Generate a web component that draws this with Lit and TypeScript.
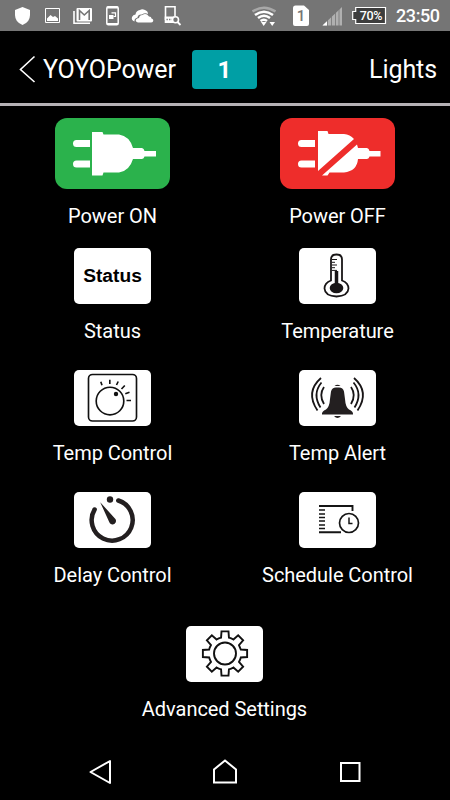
import { LitElement, html, css, svg, SVGTemplateResult } from "lit";
import { customElement, property } from "lit/decorators.js";

/** Draws a cropped piece of artwork: box is "x y width height". */
const art = (box: string, body: SVGTemplateResult) => {
  const [, , w, h] = box.split(" ");
  return html`<svg width=${w} height=${h} viewBox=${box}>${body}</svg>`;
};

const gearPath = (cx: number, cy: number) => {
  const ring: [number, number][] = [[-14, 16.3], [-9, 22.4], [9, 22.4], [14, 16.3]];
  let d = "";
  for (let i = 0; i < 8; i++) {
    ring.forEach(([da, r], k) => {
      const a = ((i * 45 + da) * Math.PI) / 180;
      const p = `${(cx + r * Math.cos(a)).toFixed(2)} ${(cy + r * Math.sin(a)).toFixed(2)}`;
      d += d === "" ? `M${p}` : k === 0 ? `A16.3 16.3 0 0 1 ${p}` : `L${p}`;
    });
  }
  return `${d}Z`;
};

const prongs = svg`<path d="M76.500 140H90V147H76.500A3.500 3.500 0 0 1 76.500 140ZM76.500 160.500H90V167.500H76.500A3.500 3.500 0 0 1 76.500 160.500Z"/>`;

const ICONS: Record<string, SVGTemplateResult> = {
  on: svg`<g fill="#fff">${prongs}
    <path d="M92 132H102.500L103.500 134.500H119Q129.500 136 133 148H142Q144 148.500 144.500 151H156V156.500H144.500Q144 158.500 142 159H133Q129.500 171 119 172.500H103.500L102.500 175.500H92Z"/></g>`,
  off: svg`<g fill="#fff">${prongs}
    <path d="M93 131H102.500L103.500 134H119Q125 134.500 129 139L93 171Z"/>
    <path d="M132 144.500L133 148H142Q144 148.500 144.500 151H155.500V156.500H144.500Q144 158.500 142 159H133Q132 171 119 172.500H104.500L102.500 175.500H97Z"/></g>`,
  temperature: svg`
    <path d="M331 280.500V259.500Q331 254.500 336.500 254.500Q342 254.500 342 259.500V280.500Q348.500 283 348.500 288.500Q348 296 336.500 296.500Q325 296 324.500 288.500Q324.500 283 331 280.500Z" fill="#fff" stroke="#181516" stroke-width="1.800"/>
    <ellipse cx="336.500" cy="288" rx="6.800" ry="5.200" fill="#181516"/>
    <path d="M336.500 271V286" stroke="#181516" stroke-width="3.500"/>
    <path d="M332 259.500H337M332 262.300H335M332 265H337M332 267.700H335M332 270.400H337" stroke="#181516" stroke-width="1"/>`,
  knob: svg`<g fill="none" stroke="#111" stroke-width="1.650">
    <rect x="88.500" y="374.500" width="48" height="46.500" rx="4"/>
    <circle cx="110" cy="401" r="13.800"/>
    <path d="M102 385.300L100.800 381.800M109.800 384V379.800M116.500 385L118.200 381.500M121.500 389L124.800 385.500M125.300 393.800L129.500 392.300M126.500 400.500H131"/></g>
    <circle cx="116" cy="394" r="2.200" fill="#111"/>`,
  bell: svg`<path d="M322 414.500Q321.500 411.500 326 409.500Q329.500 407 330 399L331 391.500Q332 387.500 336 387.500H339Q343 387.500 344 391.500L345 399Q345.500 407 349 409.500Q353.500 411.500 353 414.500ZM334.500 386Q337.500 383.500 340.500 386ZM334 416H341Q337.500 420 334 416Z" fill="#231f20"/>
    <g fill="none" stroke="#181516" stroke-width="1.800">
    <path d="M321 378Q305 392 317.500 410.500M321.500 382.500Q312 394 320.500 407.500M324 387Q318.500 395 324 404"/>
    <path d="M354 378Q370 392 357.500 410.500M353.500 382.500Q363 394 354.500 407.500M351 387Q356.500 395 351 404"/></g>`,
  timer: svg`<path d="M94.600 509.500A20.500 20.500 0 1 0 118.300 500.500" fill="none" stroke="#231f20" stroke-width="4.500" stroke-linecap="round"/>
    <circle cx="110" cy="499.500" r="3.200" fill="#231f20"/>
    <path d="M100.200 502.200L114.500 518A3.500 3.500 0 1 1 109.200 522Z" fill="#231f20"/>`,
  schedule: svg`<g fill="none" stroke="#151515">
    <path d="M319 506H352.500V511M319 532.200H341" stroke-width="1.900"/>
    <path d="M319 510H325M319 514H325M319 517.500H325M319 521H325M319 525H325M319 528.500H325" stroke-width="1.500"/>
    <circle cx="349" cy="523" r="9.500" stroke-width="1.700"/>
    <path d="M349 517.500V523.500H352.500" stroke-width="1.500"/></g>`,
  gear: svg`<g fill="none" stroke="#111" stroke-width="1.900"><path d=${gearPath(225, 653.5)}/><circle cx="225" cy="653.500" r="11"/></g>`,
};

@customElement("menu-tile")
export class MenuTile extends LitElement {
  @property() label = "";
  @property() icon = "";
  @property() box = "";
  @property() tone = "";
  static styles = css`
    :host { display: flex; flex-direction: column; align-items: center; color: #fff; }
    .face { width: 77px; height: 56px; border-radius: 5px; background: #fff; overflow: hidden;
      display: flex; align-items: center; justify-content: center; }
    .face.green, .face.red { width: 115px; height: 71px; border-radius: 12px; }
    .face.green { background: #2bb24c; }
    .face.red { background: #ee2d2b; }
    svg { display: block; }
    .word { font: bold 19.2px/22px "Liberation Sans", Arial, sans-serif; color: #000; }
    .label { font: 20px/24px Roboto, sans-serif; letter-spacing: -0.05px; white-space: nowrap; margin-top: 15px; }
  `;
  render() {
    return html`
      <div class="face ${this.tone}">
        ${this.icon === "word" ? html`<span class="word">Status</span>` : art(this.box, ICONS[this.icon])}
      </div>
      <div class="label">${this.label}</div>`;
  }
}

@customElement("status-bar")
export class StatusBar extends LitElement {
  static styles = css`
    :host { display: flex; height: 31px; background: #757575; align-items: center; color: #fff; }
    svg { display: block; height: 31px; flex: none; }
    .left { display: flex; width: 252px; flex: none; }
    .battery { position: relative; width: 35px; height: 31px; margin-left: 9px; }
    .pct { position: absolute; left: 5px; top: 8px; width: 28px; text-align: center; font: 500 12.5px/16px Roboto, sans-serif; letter-spacing: -0.3px; }
    .sim { position: relative; margin-left: 17px; }
    .simno { position: absolute; left: 0; top: 8px; width: 16px; text-align: center; color: #757575; font: 500 15px/17px Roboto, sans-serif; }
    .signal { margin-left: 12px; }
    .time { margin-left: 9px; font: 500 18px/31px Roboto, sans-serif; letter-spacing: -0.4px; height: 31px; }
  `;
  render() {
    return html`
      <div class="left">
        ${art("0 0 38 31", svg`<path d="M22.500 7L30 10V15Q30 22 22.500 25Q15 22 15 15V10Z" fill="#fff"/>`)}
        ${art("38 0 29 31", svg`<path d="M45.500 8.500H59.500V22.500H45.500Z" fill="none" stroke="#fff"/><path d="M47 21V18.500L50.500 15L53 17L55 16L58 18.500V21Z" fill="#fff"/>`)}
        ${art("67 0 33 31", svg`<path d="M74 11V23.300H90" fill="none" stroke="#fff" stroke-width="1.600"/><rect x="76.500" y="8" width="15.500" height="13.500" rx="1" fill="#fff"/><path d="M79.500 20V10.500L84.300 15L89.200 10.500V20" fill="none" stroke="#757575" stroke-width="1.600"/>`)}
        ${art("100 0 25 31", svg`<rect x="106.800" y="6.800" width="11.400" height="18" rx="1.500" fill="none" stroke="#fff" stroke-width="1.500"/><path d="M107 7.500H118M107 24H118" stroke="#fff" stroke-width="1.800"/><path d="M111.500 12.800H115.500V16.500H113.500" fill="none" stroke="#fff" stroke-width="1.200"/><path d="M109 15H113.500V19H109Z" fill="#fff"/>`)}
        ${art("125 0 33 31", svg`<path d="M134.500 21.500Q131 20 132 17Q133 14.500 135.500 14.500Q136 10.500 140 10Q142 8.500 145 10Q148 11 148 14Q145 12.500 142 14.500Q138 14 137.500 17.500Q134 18.500 134.500 21.500Z" fill="#fff"/><path d="M138 22.500Q135 21.500 136 19.500Q137 18 139 18Q139.500 15 142.500 15Q146 12.500 149 16.500Q151.500 16.500 151.500 18.500Q154 19.500 153 21.500Q152.500 22.500 151 22.500Z" fill="#fff"/>`)}
        ${art("158 0 30 31", svg`<path d="M165.500 20V6.800H175V16" fill="none" stroke="#fff" stroke-width="1.600"/><path d="M164.700 16.500H175V23H164.700Z" fill="#fff"/><path d="M166.500 19.500H173" stroke="#757575" stroke-width="1.500" stroke-dasharray="1.300 1.300"/><circle cx="175.500" cy="19.800" r="3" fill="#757575" stroke="#fff" stroke-width="1.600"/><path d="M177.500 22L180.500 25" stroke="#fff" stroke-width="1.800"/>`)}
      </div>
      ${art("252 0 24 31", svg`<g fill="none" stroke="#fff" stroke-width="2.500">
        <path d="M252.500 11.500Q264 4 275.500 11.500" stroke="#a8a8a8"/><path d="M255 15Q264 8.500 273 15M258 18Q264 13.500 270 18M260.500 21Q264 18.500 267 21"/></g>
        <path d="M261 22H266.500L263.700 26ZM269.500 22H275L272.200 26Z" fill="#fff"/>`)}
      <div class="sim">${art("293 0 16 31", svg`<path d="M295.500 5.500H304L309 10V24Q309 26 307 26H295Q293 26 293 24V8Q293 5.500 295.500 5.500Z" fill="#fff"/>`)}<span class="simno">1</span></div>
      <div class="signal">${art("321 0 22 31", svg`<path d="M342 7V25.500H322.500Z" fill="#b0b0b0"/><path d="M322.500 25.500L327 21.300V25.500Z" fill="#fff"/><path d="M327.500 7V26M331.500 7V26M335.500 7V26M339 7V26" stroke="#757575" stroke-width=".8"/>`)}</div>
      <div class="battery">${art("352 0 35 31", svg`<path d="M355.700 7.500H385.500V23.500H355.700V19.500H352.700V11.500H355.700Z" fill="#3d3d3d" stroke="#fff" stroke-width="1.200"/>`)}<span class="pct">70%</span></div>
      <span class="time">23:50</span>`;
  }
}

@customElement("app-root")
export class AppRoot extends LitElement {
  static styles = css`
    :host { display: flex; flex-direction: column; width: 450px; height: 800px; background: #000; color: #fff; overflow: hidden; font-family: Roboto, sans-serif; }
    svg { display: block; }
    header { display: flex; align-items: center; height: 72px; padding: 0 13px 0 19px; box-sizing: border-box; flex: none; font-size: 25px; line-height: 30px; }
    .back { margin: 4px 7px 0 0; }
    .title, .room { margin-top: 6px; white-space: nowrap; letter-spacing: -0.08px; }
    .title { width: 132px; }
    .badge { width: 65px; height: 39px; margin: 4px 0 0 17px; border-radius: 4px; background: #009fa5; text-align: center; font: bold 24px/40px Roboto, sans-serif; }
    .room { margin-left: auto; }
    .rule { height: 3px; background: #b5b1b5; flex: none; }
    .grid { display: grid; grid-template-columns: 225px 225px; grid-template-rows: 130px 122px 122px 122px; padding-top: 12px; flex: none; }
    .last { margin: 12px 1px 0 0; }
    nav { display: flex; justify-content: space-between; margin-top: auto; height: 56px; padding: 0 89px; align-items: center; }
  `;
  render() {
    return html`
      <status-bar></status-bar>
      <header>
        <span class="back">${art("19 54 17 28", svg`<path d="M34.500 55.500L20.500 68.500L34.500 81" fill="none" stroke="#fff" stroke-width="1.600"/>`)}</span>
        <span class="title">YOYOPower</span>
        <span class="badge">1</span>
        <span class="room">Lights</span>
      </header>
      <div class="rule"></div>
      <div class="grid">
        <menu-tile label="Power ON" icon="on" tone="green" box="55 118 115 71"></menu-tile>
        <menu-tile label="Power OFF" icon="off" tone="red" box="55 118 115 71"></menu-tile>
        <menu-tile label="Status" icon="word"></menu-tile>
        <menu-tile label="Temperature" icon="temperature" box="299 248 77 56"></menu-tile>
        <menu-tile label="Temp Control" icon="knob" box="74 370 77 56"></menu-tile>
        <menu-tile label="Temp Alert" icon="bell" box="299 370 77 56"></menu-tile>
        <menu-tile label="Delay Control" icon="timer" box="74 492 77 56"></menu-tile>
        <menu-tile label="Schedule Control" icon="schedule" box="299 492 77 56"></menu-tile>
      </div>
      <menu-tile class="last" label="Advanced Settings" icon="gear" box="186 626 77 56"></menu-tile>
      <nav>
        ${art("89 744 22 56", svg`<path d="M110 761V783L90.500 772Z" fill="none" stroke="#fff" stroke-width="2" stroke-linejoin="round"/>`)}
        ${art("212 744 26 56", svg`<path d="M214 782.500V769.500L225 760.500L236 769.500V782.500Z" fill="none" stroke="#fff" stroke-width="2"/>`)}
        ${art("339 744 22 56", svg`<rect x="341" y="763" width="18.500" height="18" fill="none" stroke="#fff" stroke-width="2"/>`)}
      </nav>`;
  }
}
